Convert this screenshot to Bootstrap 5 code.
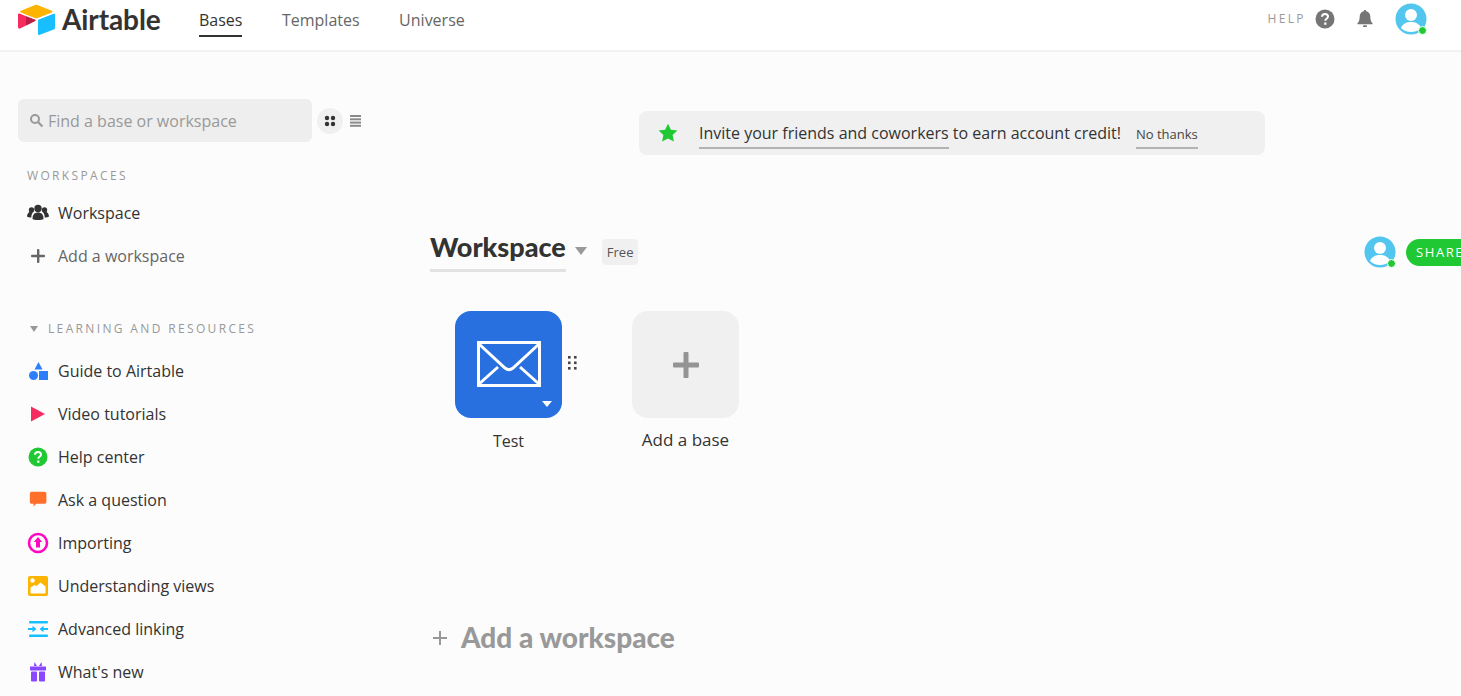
<!DOCTYPE html>
<html lang="en">
<head>
  <meta charset="UTF-8" />
  <title>Airtable - Bases</title>
  <link href="https://cdn.jsdelivr.net/npm/bootstrap@5.3.0/dist/css/bootstrap.min.css" rel="stylesheet">
  <style>
    html, body { height: 696px; overflow: hidden; }
    body { background: #fcfcfc; color: #333; font-family: "Open Sans", "Noto Sans", sans-serif; font-size: 16px; }
    .top-bar { height: 52px; background: #fff; border-bottom: 2px solid #f2f2f2; padding: 0 34px 12px 18px; }
    .brand { width: 181px; height: 36px; }
    .brand-name { font-family: "Lato", sans-serif; font-weight: 700; font-size: 28px; color: #333; line-height: 34px; margin: 0 0 0 7px; letter-spacing: -.1px; }
    .top-tab { display: block; font-size: 16px; color: #666; line-height: 24px; padding: 6px 0 3px; margin-right: 39.5px; border-bottom: 2px solid transparent; text-decoration: none; }
    .top-tab.active { color: #333; border-bottom-color: #333; }
    .help-text { font-size: 12px; letter-spacing: 2.4px; color: #999; }
    .avatar-wrap { position: relative; width: 32px; height: 32px; }
    .online-dot { position: absolute; right: 0; bottom: 0; width: 9px; height: 9px; border-radius: 50%; background: #20c933; border: 1px solid #fff; }
    .side-col { width: 430px; padding: 47px 0 0 18px; flex: none; }
    .search-box { width: 294px; height: 43px; background: #eee; border-radius: 6px; padding-left: 11px; color: #999; font-size: 16px; }
    .view-on { width: 26px; height: 26px; border-radius: 50%; background: #f0f0f0; margin-left: 5px; }
    .side-head { font-size: 12px; letter-spacing: 2.35px; color: #999; line-height: 18px; padding-left: 9px; }
    .side-row { height: 43px; padding-left: 9px; color: #333; }
    .side-row.dim { color: #666; }
    .side-ico { width: 22px; height: 22px; margin-right: 9px; flex: none; }
    .invite { width: 626px; height: 44px; margin: 59px 0 0 209px; background: #f0f0f0; border-radius: 8px; padding-left: 19px; }
    .invite-text { font-size: 16px; margin-left: 21px; }
    .dash-link { border-bottom: 2px solid #b3b3b3; padding-bottom: 3px; }
    .no-thanks { font-size: 13px; margin: 8px 0 0 15px; color: #444; }
    .ws-row { margin-top: 77px; height: 44px; }
    .ws-title { font-family: "Lato", sans-serif; font-weight: 900; font-size: 27px; line-height: 30px; border-bottom: 3px solid #e2e2e2; height: 40px; color: #333; }
    .free-tag { font-size: 13px; line-height: 26px; padding: 0 5px; background: #f0f0f0; border-radius: 4px; color: #555; margin: 7px 0 0 15px; }
    .share-btn { position: absolute; left: 976px; top: 7px; width: 90px; height: 27px; background: #20c933; color: #fff; border-radius: 13.5px; font-size: 13px; letter-spacing: 1.6px; line-height: 27px; padding-left: 10px; }
    .share-avatar { position: absolute; left: 934px; top: 4px; }
    .base-tile { width: 107px; height: 107px; border-radius: 16px; position: relative; }
    .tile-blue { background: #2870e0; }
    .tile-grey { background: #f0f0f0; }
    .tile-caret { position: absolute; right: 10px; bottom: 11px; width: 0; height: 0; border: 5px solid transparent; border-top: 6px solid #fff; border-bottom: 0; }
    .add-ws { font-family: "Lato", sans-serif; font-weight: 900; font-size: 28px; color: #999; margin-top: 168px; line-height: 34px; }
  </style>
</head>
<body>
  <header class="top-bar d-flex align-items-center">
    <div class="brand d-flex align-items-center">
      <svg width="37" height="34" viewBox="0 0 37 34">
        <path d="M16.5 3.2 2.8 8.8c-.8.3-.8 1.400 0 1.700l13.800 5.500c1.100.4 2.300.4 3.400 0l13.800-5.500c.8-.3.800-1.400 0-1.700L20.100 3.200c-1.100-.5-2.400-.5-3.600 0z" fill="#fcb400"/>
        <path d="M20 18.500v13.600c0 .7.700 1.100 1.300.9l15-5.800c.4-.2.700-.5.700-.9V12.700c0-.7-.7-1.100-1.300-.9l-15 5.800c-.4.200-.7.500-.7.900z" fill="#18bfff"/>
        <path d="M17 19 2 26.500c-.9.400-2-.2-2-1.200V12.500c0-.7.800-1.200 1.400-.9L17 17.700c.7.300.7 1 0 1.300z" fill="#f82b60"/>
        <path d="M17 19 8 23.500V14.500L17 17.700c.7.300.7 1 0 1.300z" fill="#ba1e45"/>
      </svg>
      <span class="brand-name">Airtable</span>
    </div>
    <nav class="d-flex align-items-center">
      <a class="top-tab active" href="#">Bases</a>
      <a class="top-tab" href="#">Templates</a>
      <a class="top-tab" href="#">Universe</a>
    </nav>
    <div class="ms-auto d-flex align-items-center">
      <span class="help-text">HELP</span>
      <svg class="ms-2" width="22" height="22" viewBox="0 0 22 22"><circle cx="11" cy="11" r="9.500" fill="#757575"/><path d="M8 8.700c0-1.800 1.300-2.800 3-2.800s3 1 3 2.600c0 2.300-2.700 2.200-2.700 4.200" fill="none" stroke="#fff" stroke-width="2"/><rect x="10.200" y="14.500" width="2.200" height="2.300" fill="#fff"/></svg>
      <svg style="margin-left:19px" width="20" height="20" viewBox="0 0 20 20"><path d="M10 1c-.8 0-1.300.6-1.300 1.300C6 3 4.700 5 4.700 7.500c0 4-1 5.500-2.200 6.700-.4.400-.2 1 .4 1h14.200c.6 0 .8-.6.400-1-1.200-1.200-2.200-2.700-2.200-6.700 0-2.500-1.300-4.500-4-5.200C11.300 1.600 10.800 1 10 1z" fill="#757575"/><rect x="8" y="16.300" width="4" height="1.800" rx=".9" fill="#757575"/></svg>
      <div class="avatar-wrap" style="margin-left:20px">
        <svg width="32" height="32" viewBox="0 0 32 32"><circle cx="16" cy="16" r="15.500" fill="#52c6ee"/><circle cx="16" cy="12" r="6" fill="#fff"/><path d="M6 25c2-5 6-6 10-6s8 1 10 6c-2.500 2.500-6 4-10 4s-7.500-1.500-10-4z" fill="#fff"/></svg>
        <span class="online-dot"></span>
      </div>
    </div>
  </header>

  <div class="d-flex">
    <aside class="side-col">
      <div class="d-flex align-items-center">
        <div class="search-box d-flex align-items-center">
          <svg class="me-1" width="15" height="15" viewBox="0 0 15 15"><circle cx="6" cy="6" r="4" fill="none" stroke="#999" stroke-width="2"/><path d="M9 9l4.500 4.500" stroke="#999" stroke-width="2.200"/></svg>
          Find a base or workspace
        </div>
        <div class="view-on d-flex align-items-center justify-content-center">
          <svg width="12" height="12" viewBox="0 0 12 12" fill="#333"><circle cx="3" cy="3" r="2.200"/><circle cx="9" cy="3" r="2.200"/><circle cx="3" cy="9" r="2.200"/><circle cx="9" cy="9" r="2.200"/></svg>
        </div>
        <svg style="margin-left:7px" width="11" height="12" viewBox="0 0 11 12" fill="#8a8a8a"><rect y="0" width="11" height="2"/><rect y="3.300" width="11" height="2"/><rect y="6.600" width="11" height="2"/><rect y="9.800" width="11" height="2"/></svg>
      </div>

      <div class="side-head" style="margin-top:25px;margin-bottom:6px">WORKSPACES</div>
      <div class="side-row d-flex align-items-center">
        <svg class="side-ico" viewBox="0 0 22 22" fill="#333"><circle cx="11" cy="6.500" r="3.700"/><circle cx="4.500" cy="8" r="2.700"/><circle cx="17.500" cy="8" r="2.700"/><path d="M5.500 17c0-4.500 2-6.500 5.500-6.500s5.500 2 5.500 6.500c-1.300 1.300-9.700 1.300-11 0z"/><path d="M0 14.500c0-2.700 1.500-4.800 4-4.800.8 0 1.500.2 2 .6-1.100 1.300-1.700 3-1.700 5.200-1.700 0-3.400-.3-4.300-1zM22 14.500c0-2.700-1.500-4.800-4-4.800-.8 0-1.500.2-2 .6 1.100 1.300 1.700 3 1.700 5.200 1.700 0 3.400-.3 4.300-1z"/></svg>
        Workspace
      </div>
      <div class="side-row dim d-flex align-items-center">
        <svg class="side-ico" viewBox="0 0 22 22" fill="#666"><rect x="10" y="4" width="2.400" height="14" rx="1"/><rect x="4" y="9.800" width="14" height="2.400" rx="1"/></svg>
        Add a workspace
      </div>

      <div class="side-head d-flex align-items-center" style="margin-top:43px;margin-bottom:11px">
        <span style="width:0;height:0;border:4.500px solid transparent;border-top:6px solid #999;border-bottom:0;margin:0 10px 0 3px"></span>LEARNING AND RESOURCES
      </div>
      <div class="side-row d-flex align-items-center">
        <svg class="side-ico" viewBox="0 0 22 22" fill="#2d7ff9"><path d="M11.500 2l4 7.500h-8z"/><circle cx="6.500" cy="15.500" r="4.500"/><rect x="12" y="11" width="9" height="9"/></svg>
        Guide to Airtable
      </div>
      <div class="side-row d-flex align-items-center">
        <svg class="side-ico" viewBox="0 0 22 22" fill="#f82b60"><path d="M4 3.500 18 11 4 18.500z"/></svg>
        Video tutorials
      </div>
      <div class="side-row d-flex align-items-center">
        <svg class="side-ico" viewBox="0 0 22 22"><circle cx="11" cy="11" r="9.500" fill="#20c933"/><path d="M8 8.700c0-1.800 1.300-2.800 3-2.800s3 1 3 2.600c0 2.300-2.700 2.200-2.700 4.200" fill="none" stroke="#fff" stroke-width="2"/><rect x="10.200" y="14.500" width="2.200" height="2.300" fill="#fff"/></svg>
        Help center
      </div>
      <div class="side-row d-flex align-items-center">
        <svg class="side-ico" viewBox="0 0 22 22" fill="#ff6f2c"><path d="M4 3h14c1 0 2 1 2 2v9c0 1-1 2-2 2H9l-3 3v-3H4c-1 0-2-1-2-2V5c0-1 1-2 2-2z" transform="translate(1 0) scale(.92)"/></svg>
        Ask a question
      </div>
      <div class="side-row d-flex align-items-center">
        <svg class="side-ico" viewBox="0 0 22 22"><circle cx="11" cy="11" r="9" fill="none" stroke="#ff08c2" stroke-width="2.600"/><path d="M11 5l4.200 5H13v5.500H9V10H6.800z" fill="#ff08c2"/></svg>
        Importing
      </div>
      <div class="side-row d-flex align-items-center">
        <svg class="side-ico" viewBox="0 0 22 22"><rect x="1" y="1" width="20" height="20" rx="2" fill="#fcb400"/><circle cx="5.500" cy="5.500" r="2.200" fill="#fff"/><path d="M3.500 18.500v-6l4-2.500 2 1 4-3.500 5 4v7z" fill="#fff"/></svg>
        Understanding views
      </div>
      <div class="side-row d-flex align-items-center">
        <svg class="side-ico" viewBox="0 0 22 22" fill="#18bfff"><rect x="2" y="3" width="19" height="2.400" rx="1"/><rect x="2" y="16.600" width="19" height="2.400" rx="1"/><rect x="1" y="10" width="5" height="2"/><path d="M5.500 7.800 9.500 11l-4 3.200z"/><rect x="16" y="10" width="5" height="2"/><path d="M16.500 7.800 12.500 11l4 3.200z"/></svg>
        Advanced linking
      </div>
      <div class="side-row d-flex align-items-center">
        <svg class="side-ico" viewBox="0 0 22 22" fill="#8b46ff"><rect x="3" y="5.500" width="16" height="4"/><rect x="4" y="10.500" width="6" height="10" rx="1"/><rect x="12" y="10.500" width="6" height="10" rx="1"/><path d="M7.500 1l2.500 4H7zM14.500 1 12 5h3z"/></svg>
        What's new
      </div>
    </aside>

    <main class="flex-grow-1 position-relative">
      <div class="invite d-flex align-items-center">
        <svg width="20" height="20" viewBox="0 0 20 20" fill="#20c933"><path d="M10 .8l2.900 6 6.500.8-4.800 4.500 1.300 6.500L10 15.400l-5.900 3.200 1.300-6.500L.6 7.600l6.500-.8z"/></svg>
        <span class="invite-text"><span class="dash-link">Invite your friends and coworkers</span> to earn account credit!</span>
        <span class="no-thanks dash-link">No thanks</span>
      </div>

      <div class="ws-row position-relative d-flex align-items-start">
        <div class="ws-title">Workspace</div>
        <span style="width:0;height:0;border:6px solid transparent;border-top:8px solid #999;border-bottom:0;margin:15px 0 0 9px"></span>
        <span class="free-tag">Free</span>
        <div class="avatar-wrap share-avatar">
          <svg width="32" height="32" viewBox="0 0 32 32"><circle cx="16" cy="16" r="15.500" fill="#52c6ee"/><circle cx="16" cy="12" r="6" fill="#fff"/><path d="M6 25c2-5 6-6 10-6s8 1 10 6c-2.500 2.500-6 4-10 4s-7.500-1.500-10-4z" fill="#fff"/></svg>
          <span class="online-dot"></span>
        </div>
        <div class="share-btn">SHARE</div>
      </div>

      <div class="d-flex" style="margin-top:35px;margin-left:25px">
        <div class="text-center" style="width:107px">
          <div class="base-tile tile-blue d-flex align-items-center justify-content-center">
            <svg width="64" height="46" viewBox="0 0 64 46" fill="none" stroke="#fff" stroke-width="3" style="margin-top:-2px"><rect x="1.500" y="1.500" width="61" height="43"/><path d="M2 3l26 24c2.500 2 5.500 2 8 0L62 3M2 43l19-17M62 43 43 26"/></svg>
            <span class="tile-caret"></span>
          </div>
          <div style="margin-top:12px;line-height:22px">Test</div>
        </div>
        <svg style="margin:45px 0 0 6px" width="10" height="15" viewBox="0 0 10 15" fill="#444"><rect x="0" y="0" width="2.600" height="2.600"/><rect x="6" y="0" width="2.600" height="2.600"/><rect x="0" y="5.500" width="2.600" height="2.600"/><rect x="6" y="5.500" width="2.600" height="2.600"/><rect x="0" y="11" width="2.600" height="2.600"/><rect x="6" y="11" width="2.600" height="2.600"/></svg>
        <div class="text-center" style="width:107px;margin-left:54px">
          <div class="base-tile tile-grey d-flex align-items-center justify-content-center">
            <svg width="26" height="26" viewBox="0 0 26 26" fill="#949494"><rect x="10.500" y="0" width="5" height="26" rx="1"/><rect x="0" y="10.500" width="26" height="5" rx="1"/></svg>
          </div>
          <div style="margin-top:11px;line-height:22px;font-size:17px">Add a base</div>
        </div>
      </div>

      <div class="add-ws d-flex align-items-center">
        <svg width="14" height="14" viewBox="0 0 14 14" fill="#999" style="margin:2px 14px 0 3px"><rect x="6" y="0" width="2" height="14"/><rect x="0" y="6" width="14" height="2"/></svg>
        Add a workspace
      </div>
    </main>
  </div>
  <script src="https://cdn.jsdelivr.net/npm/bootstrap@5.3.0/dist/js/bootstrap.bundle.min.js"></script>
</body>
</html>
